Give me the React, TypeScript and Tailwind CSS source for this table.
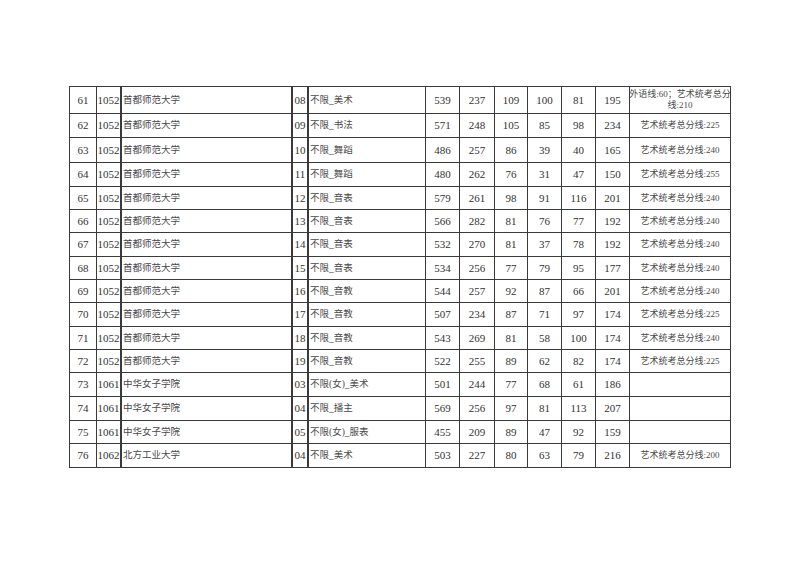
import React from "react";

type Row = {
  h: string;
  n: string;
  code: string;
  school: string;
  mc: string;
  major: string;
  v: string[];
  note: React.ReactNode;
};

const A240 = "艺术统考总分线:240";
const A225 = "艺术统考总分线:225";

const rows: Row[] = [
  { h: "h-[27px]", n: "61", code: "1052", school: "首都师范大学", mc: "08", major: "不限_美术", v: ["539", "237", "109", "100", "81", "195"], note: (<>外语线:60；艺术统考总分<br />线:210</>) },
  { h: "h-[24px]", n: "62", code: "1052", school: "首都师范大学", mc: "09", major: "不限_书法", v: ["571", "248", "105", "85", "98", "234"], note: A225 },
  { h: "h-[25px]", n: "63", code: "1052", school: "首都师范大学", mc: "10", major: "不限_舞蹈", v: ["486", "257", "86", "39", "40", "165"], note: A240 },
  { h: "h-[24px]", n: "64", code: "1052", school: "首都师范大学", mc: "11", major: "不限_舞蹈", v: ["480", "262", "76", "31", "47", "150"], note: "艺术统考总分线:255" },
  { h: "h-[23px]", n: "65", code: "1052", school: "首都师范大学", mc: "12", major: "不限_音表", v: ["579", "261", "98", "91", "116", "201"], note: A240 },
  { h: "h-[23px]", n: "66", code: "1052", school: "首都师范大学", mc: "13", major: "不限_音表", v: ["566", "282", "81", "76", "77", "192"], note: A240 },
  { h: "h-[24px]", n: "67", code: "1052", school: "首都师范大学", mc: "14", major: "不限_音表", v: ["532", "270", "81", "37", "78", "192"], note: A240 },
  { h: "h-[23px]", n: "68", code: "1052", school: "首都师范大学", mc: "15", major: "不限_音表", v: ["534", "256", "77", "79", "95", "177"], note: A240 },
  { h: "h-[23px]", n: "69", code: "1052", school: "首都师范大学", mc: "16", major: "不限_音教", v: ["544", "257", "92", "87", "66", "201"], note: A240 },
  { h: "h-[24px]", n: "70", code: "1052", school: "首都师范大学", mc: "17", major: "不限_音教", v: ["507", "234", "87", "71", "97", "174"], note: A225 },
  { h: "h-[23px]", n: "71", code: "1052", school: "首都师范大学", mc: "18", major: "不限_音教", v: ["543", "269", "81", "58", "100", "174"], note: A240 },
  { h: "h-[23px]", n: "72", code: "1052", school: "首都师范大学", mc: "19", major: "不限_音教", v: ["522", "255", "89", "62", "82", "174"], note: A225 },
  { h: "h-[24px]", n: "73", code: "1061", school: "中华女子学院", mc: "03", major: "不限(女)_美术", v: ["501", "244", "77", "68", "61", "186"], note: "" },
  { h: "h-[24px]", n: "74", code: "1061", school: "中华女子学院", mc: "04", major: "不限_播主", v: ["569", "256", "97", "81", "113", "207"], note: "" },
  { h: "h-[23px]", n: "75", code: "1061", school: "中华女子学院", mc: "05", major: "不限(女)_服表", v: ["455", "209", "89", "47", "92", "159"], note: "" },
  { h: "h-[24px]", n: "76", code: "1062", school: "北方工业大学", mc: "04", major: "不限_美术", v: ["503", "227", "80", "63", "79", "216"], note: "艺术统考总分线:200" },
];

const numW = ["w-[34px]", "w-[35px]", "w-[33px]", "w-[34px]", "w-[34px]", "w-[34px]"];

export default function App() {
  return (
    <div
      className="w-[800px] h-[566px] bg-white pt-[86px] pl-[69px] text-[#333]"
      style={{ fontFamily: '"Liberation Serif", "Noto Sans CJK SC", serif' }}
    >
      <div className="flex flex-col w-[662px] border-t border-l border-[#3a3a3a]">
        {rows.map((r) => (
          <div key={r.n} className={`flex ${r.h} border-b border-[#3a3a3a]`}>
            <div className="w-[27px] border-r border-[#3a3a3a] flex items-center justify-center text-[11px]">{r.n}</div>
            <div className="w-[25px] border-r-2 border-[#3a3a3a] flex items-center justify-center text-[11px]">{r.code}</div>
            <div className="w-[171px] border-r-2 border-[#3a3a3a] flex items-center pl-[1px] text-[9.5px] text-[#4a4a4a]">{r.school}</div>
            <div className="w-[16px] border-r-2 border-[#3a3a3a] flex items-center justify-center text-[11px]">{r.mc}</div>
            <div className="w-[117px] border-r border-[#3a3a3a] flex items-center pl-[1px] text-[9.5px] text-[#4a4a4a]">{r.major}</div>
            {r.v.map((x, i) => (
              <div key={i} className={`${numW[i]} border-r border-[#3a3a3a] flex items-center justify-center text-[11px]`}>{x}</div>
            ))}
            <div className="w-[101px] border-r border-[#3a3a3a] flex items-center justify-center text-center whitespace-nowrap text-[9px] leading-[11px] text-[#4a4a4a]">{r.note}</div>
          </div>
        ))}
      </div>
    </div>
  );
}
